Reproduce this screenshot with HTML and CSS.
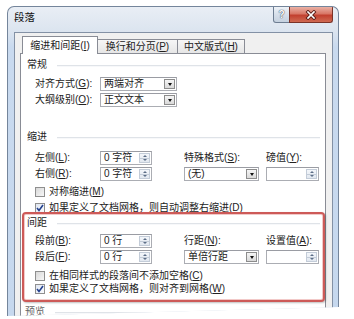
FILE: index.html
```html
<!DOCTYPE html>
<html lang="zh-CN">
<head>
    <meta charset="UTF-8">
    <title>段落</title>
    <link rel="stylesheet" href="styles.css">
</head>
<body>
    <div class="dialog">
        <div class="titlebar">
            <span class="title">段落</span>
            <div class="caption">
                <span class="btn-help">?</span>
                <span class="btn-close">
                    <svg width="12" height="10" viewBox="0 0 12 10">
                        <path d="M3 2 L9 8 M9 2 L3 8" stroke="#5a1e18" stroke-width="3.4" stroke-linecap="square" fill="none"/>
                        <path d="M3 2 L9 8 M9 2 L3 8" stroke="#fff" stroke-width="1.6" stroke-linecap="square" fill="none"/>
                    </svg>
                </span>
            </div>
        </div>

        <div class="client">
            <div class="tabs">
                <div class="tab active">缩进和间距(<u>I</u>)</div>
                <div class="tab t2">换行和分页(<u>P</u>)</div>
                <div class="tab t3">中文版式(<u>H</u>)</div>
            </div>

            <div class="panel">
                <div class="group-title">常规</div>
                <div class="grid general">
                    <span class="lbl">对齐方式(<u>G</u>):</span>
                    <div class="combo wide"><span class="val">两端对齐</span><span class="arrow"></span></div>
                    <span class="lbl">大纲级别(<u>O</u>):</span>
                    <div class="combo wide"><span class="val">正文文本</span><span class="arrow"></span></div>
                </div>

                <div class="group-title gap-big">缩进</div>
                <div class="grid fields">
                    <span class="lbl">左侧(<u>L</u>):</span>
                    <div class="spin"><span class="val">0 字符</span><span class="spin-btns"><i class="up"></i><i class="down"></i></span></div>
                    <span class="lbl">特殊格式(<u>S</u>):</span>
                    <span class="lbl">磅值(<u>Y</u>):</span>
                    <span class="lbl">右侧(<u>R</u>):</span>
                    <div class="spin"><span class="val">0 字符</span><span class="spin-btns"><i class="up"></i><i class="down"></i></span></div>
                    <div class="combo mid"><span class="val">(无)</span><span class="arrow"></span></div>
                    <div class="spin"><span class="val"></span><span class="spin-btns"><i class="up"></i><i class="down"></i></span></div>
                </div>
                <div class="cb first"><span class="box"></span><span>对称缩进(<u>M</u>)</span></div>
                <div class="cb second"><span class="box checked"><svg width="8" height="8" viewBox="0 0 8 8"><path d="M1 4 L3 6.5 L7 1" stroke="#23408e" stroke-width="1.6" fill="none"/></svg></span><span>如果定义了文档网格，则自动调整右缩进(<u>D</u>)</span></div>

                <div class="highlight">
                    <div class="group-title">间距</div>
                    <div class="grid fields">
                        <span class="lbl">段前(<u>B</u>):</span>
                        <div class="spin"><span class="val">0 行</span><span class="spin-btns"><i class="up"></i><i class="down"></i></span></div>
                        <span class="lbl">行距(<u>N</u>):</span>
                        <span class="lbl">设置值(<u>A</u>):</span>
                        <span class="lbl">段后(<u>F</u>):</span>
                        <div class="spin"><span class="val">0 行</span><span class="spin-btns"><i class="up"></i><i class="down"></i></span></div>
                        <div class="combo mid"><span class="val">单倍行距</span><span class="arrow"></span></div>
                        <div class="spin"><span class="val"></span><span class="spin-btns"><i class="up"></i><i class="down"></i></span></div>
                    </div>
                    <div class="cb tight first-sp"><span class="box"></span><span>在相同样式的段落间不添加空格(<u>C</u>)</span></div>
                    <div class="cb tight"><span class="box checked"><svg width="8" height="8" viewBox="0 0 8 8"><path d="M1 4 L3 6.5 L7 1" stroke="#23408e" stroke-width="1.6" fill="none"/></svg></span><span>如果定义了文档网格，则对齐到网格(<u>W</u>)</span></div>
                </div>

                <div class="group-title preview">预览</div>
            </div>
        </div>
    </div>
</body>
</html>
```

FILE: styles.css
```css
body {
    margin: 0;
    background: #fff;
    font-family: "Liberation Sans", "Noto Sans CJK SC", sans-serif;
    font-size: 10px;
    color: #222;
}
u {
    text-decoration: underline;
}

/* window frame */
.dialog {
    width: 330px;
    height: 310px;
    margin: 6px 0 0 7px;
    border: 1px solid #74859b;
    border-bottom: 0;
    border-radius: 7px 7px 0 0;
    background: linear-gradient(#e9eef5, #dbe4ef 25px, #c9daef 40px, #c6d8ee);
    overflow: hidden;
    clip-path: polygon(0 0, 100% 0, 100% 301px, 0 310px);
}
.titlebar {
    height: 25px;
    display: flex;
    justify-content: space-between;
    align-items: flex-start;
    padding: 0 5px 0 6px;
}
.title {
    line-height: 21px;
    font-size: 10.5px;
    color: #111;
}
.caption {
    display: flex;
}
.btn-help,
.btn-close {
    height: 16px;
    box-sizing: border-box;
    display: flex;
    align-items: center;
    justify-content: center;
    border: 1px solid #6d7d92;
    border-top: 0;
}
.btn-help {
    width: 17px;
    border-radius: 0 0 0 3px;
    background: linear-gradient(#eef2f7, #d6dfea 50%, #c5d1df);
    color: #fff;
    font-weight: bold;
    font-size: 10px;
    text-shadow: 0 0 1px #344256, 0 0 1px #344256;
}
.btn-close {
    width: 44px;
    margin-left: -1px;
    border-color: #7a3328;
    border-radius: 0 0 3px 0;
    background: linear-gradient(#eab1a5, #d87766 45%, #c2402f 55%, #cf6a52);
}

/* client area */
.client {
    margin-left: 6px;
    width: 319px;
    height: 290px;
    box-sizing: border-box;
    border: 1px solid #8391a5;
    border-bottom: 0;
    background: #f0f0f0;
    padding: 3px 6px 0 5px;
}
.tabs {
    display: flex;
    align-items: flex-end;
    height: 17px;
    padding-left: 2px;
}
.tab {
    height: 14px;
    box-sizing: border-box;
    border: 1px solid #898c95;
    border-bottom: 0;
    background: linear-gradient(#f6f6f6, #e6e6e6);
    line-height: 13px;
    text-align: center;
    white-space: nowrap;
}
.tab + .tab {
    margin-left: -1px;
}
.tab.active {
    width: 76px;
    height: 18px;
    line-height: 17px;
    margin-bottom: -1px;
    background: #fff;
    position: relative;
    z-index: 1;
}
.tab.t2 {
    width: 81px;
}
.tab.t3 {
    width: 68px;
}

.panel {
    height: 270px;
    box-sizing: border-box;
    background: #fff;
    border: 1px solid #898c95;
    padding: 4px 5px 0 6px;
}

/* group headings with etched rule */
.group-title {
    display: flex;
    align-items: center;
    height: 14px;
    line-height: 14px;
    gap: 10px;
    white-space: nowrap;
}
.group-title::after {
    content: "";
    flex: 1;
    height: 1px;
    background: #dfe3e8;
    box-shadow: 0 1px 0 #f7f8fa;
}
.group-title.gap-big {
    margin-top: 23px;
}
.group-title.preview {
    margin-top: 3px;
    margin-left: -2px;
    color: #666;
}

/* field grids */
.grid {
    display: grid;
    grid-template-columns: 65px 84px 82px 53px;
    grid-template-rows: 14px 14px;
    row-gap: 2px;
    margin-left: 8px;
    align-items: center;
}
.grid.general {
    grid-template-columns: 65px 77px;
    margin-top: 5px;
}
.grid.fields {
    margin-top: 7px;
}
.highlight .grid.fields {
    margin-top: 4px;
}
.lbl {
    line-height: 14px;
    white-space: nowrap;
}

.combo,
.spin {
    display: flex;
    height: 14px;
    box-sizing: border-box;
    border: 1px solid #abadb3;
    border-top-color: #9a9ca3;
    background: #fff;
}
.combo.wide {
    width: 77px;
}
.combo.mid {
    width: 75px;
}
.spin {
    width: 53px;
}
.grid .spin:nth-child(2),
.grid .spin:nth-child(6) {
    width: 52px;
}
.val {
    flex: 1;
    padding-left: 3px;
    line-height: 12px;
    white-space: nowrap;
    overflow: hidden;
}
.arrow {
    width: 11px;
    margin: 1px;
    box-sizing: border-box;
    border: 1px solid #8c8c8c;
    background: linear-gradient(#f5f5f5, #d9d9d9);
    display: flex;
    align-items: center;
    justify-content: center;
}
.arrow::after {
    content: "";
    border-left: 2.5px solid transparent;
    border-right: 2.5px solid transparent;
    border-top: 3px solid #111;
}
.spin-btns {
    width: 11px;
    margin: 1px;
    display: flex;
    flex-direction: column;
    box-sizing: border-box;
    border: 1px solid #c3ccd8;
    background: linear-gradient(#f3f6fa, #e2e8f0);
}
.spin-btns i {
    flex: 1;
    display: flex;
    align-items: center;
    justify-content: center;
}
.spin-btns i.up {
    border-bottom: 1px solid #c3ccd8;
}
.spin-btns i.up::after {
    content: "";
    border-left: 2px solid transparent;
    border-right: 2px solid transparent;
    border-bottom: 2px solid #5d6e87;
}
.spin-btns i.down::after {
    content: "";
    border-left: 2px solid transparent;
    border-right: 2px solid transparent;
    border-top: 2px solid #5d6e87;
}

/* checkboxes */
.cb {
    display: flex;
    align-items: center;
    gap: 4px;
    height: 14px;
    line-height: 14px;
    margin-left: 8px;
    white-space: nowrap;
}
.cb.first {
    margin-top: 4px;
}
.cb.second {
    margin-top: 2px;
}
.cb.tight {
    height: 13px;
    line-height: 13px;
}
.cb.first-sp {
    margin-top: 5px;
}
.box {
    width: 10px;
    height: 10px;
    box-sizing: border-box;
    border: 1px solid #8f8f8f;
    background: linear-gradient(135deg, #d8d8d8, #f7f7f7);
    display: flex;
    align-items: center;
    justify-content: center;
}
.box.checked {
    background: linear-gradient(135deg, #dfe6f2, #fafbfd);
}

/* red annotation box over the spacing group */
.highlight {
    position: relative;
    z-index: 1;
    margin: -3px -5px 0 -5px;
    padding: 2px 3px 5px 3px;
    border: 2px solid #cd5a58;
    border-radius: 4px;
    background: #fff;
    box-shadow: inset 0 0 0 1px #f2c9c8, 1px 1px 2px rgba(0, 0, 0, 0.25);
}
```
